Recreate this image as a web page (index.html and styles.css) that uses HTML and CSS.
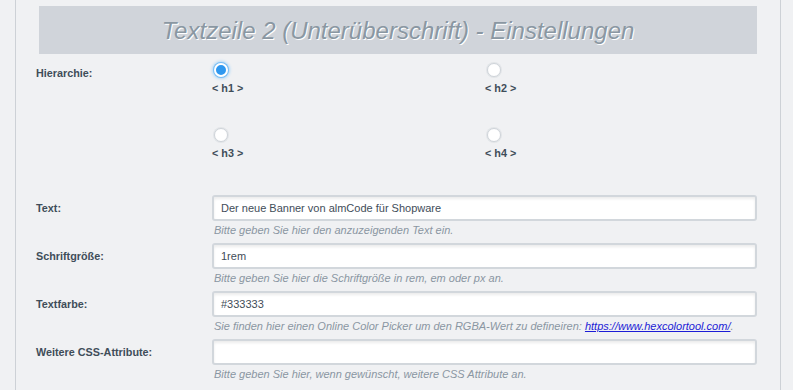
FILE: index.html
```html
<!DOCTYPE html>
<html lang="de">
<head>
<meta charset="utf-8">
<link rel="stylesheet" href="styles.css">
</head>
<body>
<div class="panel">
  <div class="banner"><h2 class="title">Textzeile 2 (Unterüberschrift) - Einstellungen</h2></div>

  <div class="row row-radio">
    <div class="label">Hierarchie:</div>
    <div class="radios">
      <div class="opt"><span class="radio checked"></span><span class="optlabel">&lt; h1 &gt;</span></div>
      <div class="opt"><span class="radio"></span><span class="optlabel">&lt; h2 &gt;</span></div>
      <div class="opt"><span class="radio"></span><span class="optlabel">&lt; h3 &gt;</span></div>
      <div class="opt"><span class="radio"></span><span class="optlabel">&lt; h4 &gt;</span></div>
    </div>
  </div>

  <div class="row">
    <div class="label">Text:</div>
    <div class="field">
      <div class="input">Der neue Banner von almCode für Shopware</div>
      <div class="help">Bitte geben Sie hier den anzuzeigenden Text ein.</div>
    </div>
  </div>

  <div class="row">
    <div class="label">Schriftgröße:</div>
    <div class="field">
      <div class="input">1rem</div>
      <div class="help">Bitte geben Sie hier die Schriftgröße in rem, em oder px an.</div>
    </div>
  </div>

  <div class="row">
    <div class="label">Textfarbe:</div>
    <div class="field">
      <div class="input">#333333</div>
      <div class="help">Sie finden hier einen Online Color Picker um den RGBA-Wert zu defineiren: <a href="#">https://www.hexcolortool.com/</a>.</div>
    </div>
  </div>

  <div class="row">
    <div class="label">Weitere CSS-Attribute:</div>
    <div class="field">
      <div class="input"></div>
      <div class="help">Bitte geben Sie hier, wenn gewünscht, weitere CSS Attribute an.</div>
    </div>
  </div>
</div>
</body>
</html>
```

FILE: styles.css
```css
html, body {
  margin: 0;
  padding: 0;
  background: #f0f1f3;
  font-family: "Liberation Sans", Arial, sans-serif;
}
.panel {
  margin-left: 15px;
  width: 766px;
  height: 390px;
  border-left: 1px solid #cdd1d6;
  border-right: 1px solid #cdd1d6;
  padding: 6px 23px 0 23px;
  box-sizing: border-box;
}
.banner {
  background: #d0d4da;
  height: 48px;
  display: flex;
  align-items: center;
  justify-content: center;
}
.title {
  margin: 0;
  font-weight: normal;
  font-style: italic;
  font-size: 24px;
  color: #8a97a2;
  text-shadow: 1px 1px 0 #ffffff;
  padding-top: 2px;
}
.row {
  display: flex;
  margin-left: -3px;
}
.label {
  width: 176px;
  flex: none;
  font-size: 10.8px;
  font-weight: bold;
  color: #3f4d59;
  line-height: 26px;
}
.row.row-radio {
  margin-top: 9px;
  height: 128px;
}
.row-radio .label {
  padding-top: 4px;
  line-height: 13px;
}
.radios {
  display: grid;
  grid-template-columns: 273px 273px;
  grid-auto-rows: 65px;
}
.opt {
  display: flex;
  flex-direction: column;
  align-items: flex-start;
}
.radio {
  width: 14px;
  height: 14px;
  border-radius: 50%;
  background: #ffffff;
  border: 1px solid #cfd4d9;
  box-shadow: 0 0 0 1px #e2e5e8;
  margin-left: 2px;
  box-sizing: border-box;
}
.radio.checked {
  background: #2f98ef;
  border: 2px solid #ffffff;
  box-shadow: 0 0 0 1px #78bdf4, 0 0 3px 2px #acd7f8;
}
.optlabel {
  margin-top: 5px;
  font-size: 10.8px;
  font-weight: bold;
  color: #3f4d59;
}
.field {
  flex: 1;
}
.input {
  height: 26px;
  box-sizing: border-box;
  border: 2px solid #d2d7dc;
  border-radius: 3px;
  background: #ffffff;
  box-shadow: inset 0 2px 3px rgba(0,0,0,0.08);
  font-size: 11px;
  color: #3f4d59;
  line-height: 22px;
  padding-left: 7px;
}
.help {
  font-size: 11px;
  font-style: italic;
  color: #8a96a2;
  padding: 3px 0 0 2px;
  height: 18px;
  box-sizing: border-box;
  white-space: nowrap;
}
.help a {
  color: #1b1bd6;
}
.row + .row {
  margin-top: 4px;
}
```
